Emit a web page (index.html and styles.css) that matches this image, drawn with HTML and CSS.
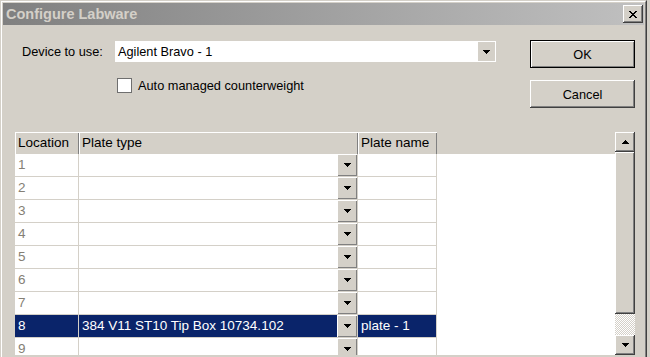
FILE: index.html
```html
<!DOCTYPE html>
<html lang="en">
<head>
<meta charset="UTF-8">
<title>Configure Labware</title>
<link rel="stylesheet" href="styles.css">
</head>
<body>

<div class="window">
  <div class="frame">
    <div class="titlebar">
      <span class="title">Configure Labware</span>
      <button type="button" class="close">
        <svg width="8" height="7" viewBox="0 0 8 7"><path d="M0 0h2v1H0zM6 0h2v1H6zM1 1h2v1H1zM5 1h2v1H5zM2 2h4v1H2zM3 3h2v1H3zM2 4h4v1H2zM1 5h2v1H1zM5 5h2v1H5zM0 6h2v1H0zM6 6h2v1H6z"/></svg>
      </button>
    </div>

    <div class="content">
      <div class="top">
        <div class="form">
          <div class="field">
            <label class="field-label">Device to use:</label>
            <div class="select">
              <span class="select-value">Agilent Bravo - 1</span>
              <span class="select-btn">
                <svg width="7" height="4" viewBox="0 0 7 4"><path d="M0 0h7v1H0zM1 1h5v1H1zM2 2h3v1H2zM3 3h1v1H3z"/></svg>
              </span>
            </div>
          </div>
          <label class="check"><span class="check-box"></span>Auto managed counterweight</label>
        </div>
        <div class="buttons">
          <button type="button" class="btn btn-default">OK</button>
          <button type="button" class="btn">Cancel</button>
        </div>
      </div>

      <div class="grid">
        <div class="table">
          <div class="row head">
            <div class="hcell">Location</div>
            <div class="hcell">Plate type</div>
            <div class="hcell">Plate name</div>
            <div></div>
          </div>
          <div id="rows"></div>
        </div>
        <div class="scrollbar">
          <div class="sb-btn">
            <svg width="7" height="4" viewBox="0 0 7 4"><path d="M3 0h1v1H3zM2 1h3v1H2zM1 2h5v1H1zM0 3h7v1H0z"/></svg>
          </div>
          <div class="sb-thumb"></div>
          <div class="sb-track"></div>
          <div class="sb-btn">
            <svg width="7" height="4" viewBox="0 0 7 4"><path d="M0 0h7v1H0zM1 1h5v1H1zM2 2h3v1H2zM3 3h1v1H3z"/></svg>
          </div>
        </div>
      </div>
    </div>
  </div>
</div>

<script>
  const rows = document.getElementById('rows');
  const labware = { 8: { type: '384 V11 ST10 Tip Box 10734.102', name: 'plate - 1' } };
  const arrow = '<svg width="7" height="4" viewBox="0 0 7 4"><path d="M0 0h7v1H0zM1 1h5v1H1zM2 2h3v1H2zM3 3h1v1H3z"/></svg>';

  for (let i = 1; i <= 9; i++) {
    const item = labware[i] || { type: '', name: '' };
    const row = document.createElement('div');
    row.className = 'row' + (labware[i] ? ' selected' : '');
    row.innerHTML =
      '<div class="cell loc">' + i + '</div>' +
      '<div class="cell type"><span>' + item.type + '</span><span class="cell-btn">' + arrow + '</span></div>' +
      '<div class="cell">' + item.name + '</div>' +
      '<div class="filler"></div>';
    rows.appendChild(row);
  }
</script>

</body>
</html>
```

FILE: styles.css
```css
body {
  margin: 0;
  height: 357px;
  overflow: hidden;
  background: #d4d0c8;
  font-family: "Liberation Sans", Arial, sans-serif;
  font-size: 12.75px;
  color: #000;
}
.window {
  width: 647px;
  height: 357px;
  box-sizing: border-box;
  border: 1px solid;
  border-bottom: none;
  border-color: #d4d0c8 #404040 #404040 #d4d0c8;
}
.frame {
  height: 100%;
  box-sizing: border-box;
  border: 1px solid;
  border-bottom: none;
  border-color: #fff #808080 #808080 #fff;
  padding: 1px 1px 0;
  background: #d4d0c8;
  overflow: hidden;
}
.titlebar {
  height: 22px;
  display: flex;
  align-items: center;
  justify-content: space-between;
  padding: 0 1px 0 3px;
  background: linear-gradient(to right, #808080, #c0c0c0);
}
.title {
  color: #d4d0c8;
  font-weight: bold;
  font-size: 14.5px;
}
.close {
  width: 20px;
  height: 18px;
  padding: 0;
  border: none;
  background: #d4d0c8;
  display: flex;
  align-items: center;
  justify-content: center;
  box-shadow: inset -1px -1px #404040, inset 1px 1px #fff, inset -2px -2px #808080;
}

.content {
  padding: 15px 9px 0 12px;
}
.top {
  display: flex;
  justify-content: space-between;
}
.form {
  padding-top: 1px;
}
.field {
  display: flex;
  align-items: center;
  height: 21px;
}
.field-label {
  width: 100px;
  padding-left: 7px;
  box-sizing: border-box;
}
.select {
  width: 381px;
  height: 21px;
  background: #fff;
  display: flex;
  align-items: center;
  justify-content: space-between;
}
.select-value {
  padding-left: 3px;
}
.select-btn {
  width: 17px;
  height: 19px;
  margin-right: 1px;
  background: #d4d0c8;
  display: flex;
  align-items: center;
  justify-content: center;
}
.check {
  display: flex;
  align-items: center;
  gap: 6px;
  margin: 16px 0 0 102px;
}
.check-box {
  width: 15px;
  height: 15px;
  box-sizing: border-box;
  background: #fff;
  border: 1px solid #6f6f6f;
}
.buttons {
  width: 105px;
  display: flex;
  flex-direction: column;
  gap: 12px;
}
.btn {
  height: 28px;
  padding: 0;
  border: none;
  font: inherit;
  color: #000;
  background: #d4d0c8;
  box-shadow: inset -1px -1px #404040, inset 1px 1px #fff, inset -2px -2px #808080;
}
.btn-default {
  border: 1px solid #000;
  box-shadow: inset 1px 1px #fff, inset -1px -1px #808080;
}

.grid {
  display: flex;
  height: 223px;
  margin-top: 24px;
}
.table {
  flex: 1;
  background: #fff;
  overflow: hidden;
  font-size: 13.5px;
}
.row {
  display: grid;
  grid-template-columns: 64px 279px 79px 1fr;
}
.head {
  height: 22px;
  background: #d4d0c8;
}
.hcell {
  padding-left: 3px;
  line-height: 22px;
  box-shadow: inset 1px 1px #fff, inset -1px 0 #808080;
}
.cell {
  height: 23px;
  box-sizing: border-box;
  padding-left: 3px;
  line-height: 22px;
  white-space: nowrap;
  border-right: 1px solid #d4d0c8;
  border-bottom: 1px solid #d4d0c8;
}
.loc {
  color: #857f75;
}
.type {
  display: flex;
  justify-content: space-between;
}
.cell-btn {
  width: 20px;
  height: 22px;
  background: #d4d0c8;
  display: flex;
  align-items: center;
  justify-content: center;
  box-shadow: inset 1px 1px #fff, inset -1px -1px #808080;
}
.selected .cell {
  background: #0a246a;
  color: #fff;
}

.scrollbar {
  width: 20px;
  display: flex;
  flex-direction: column;
}
.sb-btn,
.sb-thumb {
  background: #d4d0c8;
  box-shadow: inset -1px -1px #404040, inset 1px 1px #fff, inset -2px -2px #808080;
}
.sb-btn {
  height: 20px;
  display: flex;
  align-items: center;
  justify-content: center;
}
.sb-thumb {
  height: 162px;
}
.sb-track {
  flex: 1;
  background: repeating-conic-gradient(#fff 0 25%, #d4d0c8 0 50%) 0 0 / 2px 2px;
}
```
